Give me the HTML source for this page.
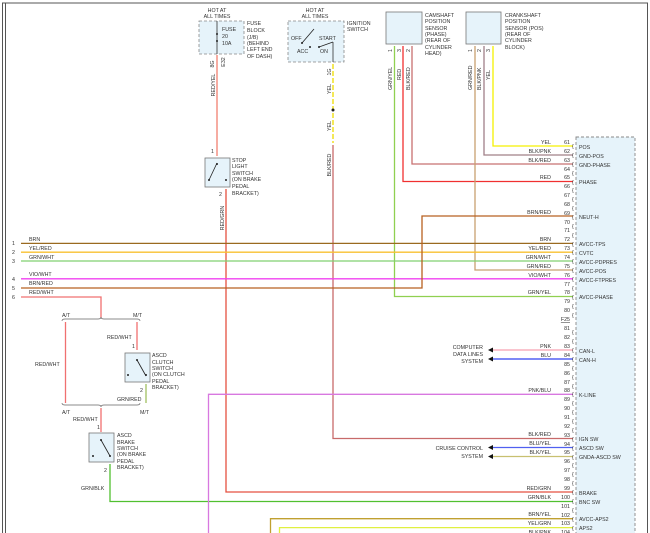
<!DOCTYPE html>
<html><head><meta charset="utf-8"><style>
html,body{margin:0;padding:0;background:#fff;width:650px;height:533px;overflow:hidden}
svg{display:block}
text{font-family:"Liberation Sans",sans-serif;font-size:5.3px;fill:#333}
.r{text-anchor:end}.c{text-anchor:middle}
.w{fill:none;stroke-width:1.3}
</style></head><body>
<svg width="650" height="533" viewBox="0 0 650 533">
<!-- border -->
<line x1="2.5" y1="3" x2="2.5" y2="533" stroke="#555" stroke-width="1"/>
<line x1="5.5" y1="3" x2="5.5" y2="533" stroke="#555" stroke-width="1"/>
<line x1="2" y1="3" x2="648" y2="3" stroke="#555" stroke-width="1"/>
<line x1="647.5" y1="3" x2="647.5" y2="533" stroke="#555" stroke-width="1"/>

<!-- ECM box -->
<rect x="576" y="137" width="59" height="400" fill="#e6f3fa" stroke="#888" stroke-dasharray="3,2" stroke-width="0.9"/>

<!-- fuse box -->
<rect x="199" y="21" width="45" height="33" fill="#e6f3fa" stroke="#888" stroke-dasharray="3,2" stroke-width="0.8"/>
<text class="c" x="217" y="12">HOT AT</text><text class="c" x="217" y="18">ALL TIMES</text>
<line x1="217" y1="21" x2="217" y2="54" stroke="#333" stroke-width="0.8"/>
<circle cx="217" cy="34" r="1" fill="#222"/><circle cx="217" cy="41" r="1" fill="#222"/>
<text x="222" y="31">FUSE</text><text x="222" y="38">20</text><text x="222" y="45">10A</text>
<text x="247" y="25">FUSE</text><text x="247" y="32">BLOCK</text><text x="247" y="39">(J/B)</text><text x="247" y="45">(BEHIND</text><text x="247" y="51">LEFT END</text><text x="247" y="58">OF DASH)</text>
<text transform="translate(214,64) rotate(-90)" class="c">8G</text>
<text transform="translate(225,62) rotate(-90)" class="c">E32</text>
<line class="w" x1="217" y1="55" x2="217" y2="156" stroke="#f08070" stroke-width="1.8"/>
<text transform="translate(215,85) rotate(-90)" class="c">RED/YEL</text>
<!-- stop light switch -->
<text x="211" y="153">1</text>
<rect x="205" y="158" width="25" height="29" fill="#e6f3fa" stroke="#777" stroke-width="0.8"/>
<line x1="217" y1="163" x2="209" y2="180" stroke="#222" stroke-width="0.8"/>
<circle cx="217" cy="164" r="1" fill="#222"/><circle cx="209" cy="180" r="1" fill="#222"/><circle cx="226" cy="180" r="1" fill="#222"/>
<text x="232" y="162">STOP</text><text x="232" y="168">LIGHT</text><text x="232" y="175">SWITCH</text><text x="232" y="181">(ON BRAKE</text><text x="232" y="188">PEDAL</text><text x="232" y="195">BRACKET)</text>
<text x="219" y="196">2</text>
<polyline class="w" points="226,189 226,492 573,492" stroke="#e55040" stroke-width="1.6"/>
<text transform="translate(224,218) rotate(-90)" class="c">RED/GRN</text>

<!-- ignition -->
<text class="c" x="315" y="12">HOT AT</text><text class="c" x="315" y="18">ALL TIMES</text>
<rect x="288" y="21" width="56" height="41" fill="#e6f3fa" stroke="#888" stroke-dasharray="3,2" stroke-width="0.8"/>
<text x="347" y="25">IGNITION</text><text x="347" y="31">SWITCH</text>
<text x="291" y="40">OFF</text><text x="297" y="53">ACC</text><text x="319" y="40">START</text><text x="320" y="53">ON</text>
<line x1="302" y1="43" x2="314" y2="29" stroke="#222" stroke-width="0.8"/>
<circle cx="302" cy="43" r="1" fill="#222"/><circle cx="310" cy="47" r="1" fill="#222"/><circle cx="319" cy="47" r="1" fill="#222"/>
<line x1="319" y1="47" x2="333" y2="42" stroke="#222" stroke-width="0.8"/>
<line x1="333" y1="42" x2="333" y2="62" stroke="#333" stroke-width="0.8"/>
<line x1="333" y1="64" x2="333" y2="143" stroke="#f0e020" stroke-width="1.5" stroke-dasharray="5,2"/>
<circle cx="333" cy="110" r="1.5" fill="#222"/>
<text transform="translate(331,72) rotate(-90)" class="c">1G</text>
<text transform="translate(331,89) rotate(-90)" class="c">YEL</text>
<text transform="translate(331,126) rotate(-90)" class="c">YEL</text>
<polyline class="w" points="333,145 333,438.5 573,438.5" stroke="#c86a6a"/>
<text transform="translate(331,165) rotate(-90)" class="c">BLK/RED</text>

<!-- camshaft -->
<rect x="386" y="12" width="36" height="32" fill="#e6f3fa" stroke="#777" stroke-width="0.8"/>
<text x="425" y="17">CAMSHAFT</text><text x="425" y="23">POSITION</text><text x="425" y="30">SENSOR</text><text x="425" y="36">(PHASE)</text><text x="425" y="42">(REAR OF</text><text x="425" y="49">CYLINDER</text><text x="425" y="55">HEAD)</text>
<text transform="translate(392,52) rotate(-90)">1</text><text transform="translate(401,52) rotate(-90)">3</text><text transform="translate(410,52) rotate(-90)">2</text>
<polyline class="w" points="394.5,46 394.5,296.5 573,296.5" stroke="#90d050"/>
<polyline class="w" points="403,46 403,181.5 573,181.5" stroke="#f03030"/>
<polyline class="w" points="412,46 412,164 573,164" stroke="#c87070"/>
<text transform="translate(392,90) rotate(-90)">GRN/YEL</text>
<text transform="translate(401,80) rotate(-90)">RED</text>
<text transform="translate(410,90) rotate(-90)">BLK/RED</text>

<!-- crank -->
<rect x="466" y="12" width="35" height="32" fill="#e6f3fa" stroke="#777" stroke-width="0.8"/>
<text x="505" y="17">CRANKSHAFT</text><text x="505" y="23">POSITION</text><text x="505" y="30">SENSOR (POS)</text><text x="505" y="36">(REAR OF</text><text x="505" y="42">CYLINDER</text><text x="505" y="49">BLOCK)</text>
<text transform="translate(472,52) rotate(-90)">1</text><text transform="translate(481,52) rotate(-90)">2</text><text transform="translate(490,52) rotate(-90)">3</text>
<polyline class="w" points="475,46 475,270 573,270" stroke="#c8a070"/>
<polyline class="w" points="484,46 484,155 573,155" stroke="#a08088"/>
<polyline class="w" points="493,46 493,146 573,146" stroke="#f5f000" stroke-width="1.6"/>
<text transform="translate(472,90) rotate(-90)">GRN/RED</text>
<text transform="translate(481,90) rotate(-90)">BLK/PNK</text>
<text transform="translate(490,80) rotate(-90)">YEL</text>

<!-- left horizontal wires -->
<g>
<text x="12" y="245">1</text><text x="12" y="254">2</text><text x="12" y="263">3</text><text x="12" y="281">4</text><text x="12" y="290">5</text><text x="12" y="299">6</text>
<text x="29" y="241">BRN</text><text x="29" y="250">YEL/RED</text><text x="29" y="259">GRN/WHT</text><text x="29" y="276">VIO/WHT</text><text x="29" y="285">BRN/RED</text><text x="29" y="294">RED/WHT</text>
<line class="w" x1="21" y1="243.4" x2="573" y2="243.4" stroke="#9a6a20"/>
<line class="w" x1="21" y1="252.2" x2="573" y2="252.2" stroke="#f8c030"/>
<line class="w" x1="21" y1="261" x2="573" y2="261" stroke="#80d070" stroke-width="1.6"/>
<line class="w" x1="21" y1="278.8" x2="573" y2="278.8" stroke="#f040f0"/>
<polyline class="w" points="21,288 422,288 422,216 573,216" stroke="#b86020"/>
<polyline class="w" points="21,297 101,297 101,318" stroke="#f07070"/>
</g>

<!-- A/T M/T -->
<path d="M62,321 q0,-2 3,-2 h33 q3,0 3,-2 q0,2 3,2 h33 q3,0 3,2" fill="none" stroke="#666" stroke-width="0.7"/>
<text x="62" y="317">A/T</text><text x="133" y="317">M/T</text>
<line class="w" x1="65.5" y1="322" x2="65.5" y2="403" stroke="#f07070"/>
<line class="w" x1="137" y1="322" x2="137" y2="350" stroke="#f07070"/>
<text x="35" y="366">RED/WHT</text><text x="107" y="339">RED/WHT</text>
<text x="132" y="348">1</text>
<rect x="125" y="353" width="25" height="29" fill="#e6f3fa" stroke="#777" stroke-width="0.8"/>
<line x1="137" y1="360" x2="146" y2="376" stroke="#222" stroke-width="0.8"/>
<circle cx="137" cy="360" r="1" fill="#222"/><circle cx="146" cy="375" r="1" fill="#222"/><circle cx="128" cy="375" r="1" fill="#222"/>
<text x="152" y="357">ASCD</text><text x="152" y="364">CLUTCH</text><text x="152" y="370">SWITCH</text><text x="152" y="376">(ON CLUTCH</text><text x="152" y="383">PEDAL</text><text x="152" y="389">BRACKET)</text>
<text x="140" y="392">2</text>
<line class="w" x1="146" y1="384" x2="146" y2="403" stroke="#a0c060"/>
<text x="117" y="401">GRN/RED</text>
<path d="M62,403 q0,2 3,2 h33 q3,0 3,2 q0,-2 3,-2 h33 q3,0 3,-2" fill="none" stroke="#666" stroke-width="0.7"/>
<text x="62" y="414">A/T</text><text x="140" y="414">M/T</text>
<line class="w" x1="101" y1="408" x2="101" y2="432" stroke="#f07070"/>
<text x="73" y="421">RED/WHT</text>
<text x="97" y="429">1</text>
<rect x="89" y="433" width="25" height="29" fill="#e6f3fa" stroke="#777" stroke-width="0.8"/>
<line x1="101" y1="440" x2="110" y2="456" stroke="#222" stroke-width="0.8"/>
<circle cx="101" cy="440" r="1" fill="#222"/><circle cx="110" cy="456" r="1" fill="#222"/><circle cx="93" cy="456" r="1" fill="#222"/>
<text x="117" y="437">ASCD</text><text x="117" y="444">BRAKE</text><text x="117" y="450">SWITCH</text><text x="117" y="456">(ON BRAKE</text><text x="117" y="463">PEDAL</text><text x="117" y="469">BRACKET)</text>
<text x="104" y="472">2</text>
<polyline class="w" points="110,464 110,501.5 573,501.5" stroke="#50c030"/>
<text x="81" y="490">GRN/BLK</text>

<!-- PNK/BLU -->
<polyline class="w" points="208.5,533 208.5,394.3 573,394.3" stroke="#d878e0"/>
<!-- bottom -->
<polyline class="w" points="270.5,533 270.5,518.7 573,518.7" stroke="#c0a030"/>
<polyline class="w" points="279.5,533 279.5,527.6 573,527.6" stroke="#e0f040"/>

<!-- data lines -->
<line class="w" x1="492" y1="350" x2="573" y2="350" stroke="#f8a0b0" stroke-width="1.5"/>
<line class="w" x1="492" y1="359" x2="573" y2="359" stroke="#3040f0" stroke-width="1.5"/>
<polygon points="488,350 493,347.5 493,352.5" fill="#111"/><polygon points="488,359 493,356.5 493,361.5" fill="#111"/>
<text class="r" x="483" y="349">COMPUTER</text><text class="r" x="483" y="356">DATA LINES</text><text class="r" x="483" y="363">SYSTEM</text>
<line class="w" x1="492" y1="447.5" x2="573" y2="447.5" stroke="#5060f0"/>
<line class="w" x1="492" y1="456.5" x2="573" y2="456.5" stroke="#c8c070"/>
<polygon points="488,447.5 493,445 493,450" fill="#111"/><polygon points="488,456.5 493,454 493,459" fill="#111"/>
<text class="r" x="483" y="450">CRUISE CONTROL</text><text class="r" x="483" y="458">SYSTEM</text>

<!-- wire labels at ECM -->
<g class="r">
<text class="r" x="551" y="144">YEL</text>
<text class="r" x="551" y="153">BLK/PNK</text>
<text class="r" x="551" y="162">BLK/RED</text>
<text class="r" x="551" y="179">RED</text>
<text class="r" x="551" y="214">BRN/RED</text>
<text class="r" x="551" y="241">BRN</text>
<text class="r" x="551" y="250">YEL/RED</text>
<text class="r" x="551" y="259">GRN/WHT</text>
<text class="r" x="551" y="268">GRN/RED</text>
<text class="r" x="551" y="277">VIO/WHT</text>
<text class="r" x="551" y="294">GRN/YEL</text>
<text class="r" x="551" y="348">PNK</text>
<text class="r" x="551" y="357">BLU</text>
<text class="r" x="551" y="392">PNK/BLU</text>
<text class="r" x="551" y="436">BLK/RED</text>
<text class="r" x="551" y="445">BLU/YEL</text>
<text class="r" x="551" y="454">BLK/YEL</text>
<text class="r" x="551" y="490">RED/GRN</text>
<text class="r" x="551" y="499">GRN/BLK</text>
<text class="r" x="551" y="516">BRN/YEL</text>
<text class="r" x="551" y="525">YEL/GRN</text>
<text class="r" x="551" y="534">BLK/PNK</text>
</g>
<!-- pin numbers -->
<g>
<text class="r" x="570" y="144">61</text><text class="r" x="570" y="153">62</text><text class="r" x="570" y="162">63</text><text class="r" x="570" y="171">64</text><text class="r" x="570" y="179">65</text><text class="r" x="570" y="188">66</text><text class="r" x="570" y="197">67</text><text class="r" x="570" y="206">68</text><text class="r" x="570" y="215">69</text><text class="r" x="570" y="224">70</text><text class="r" x="570" y="232">71</text><text class="r" x="570" y="241">72</text><text class="r" x="570" y="250">73</text><text class="r" x="570" y="259">74</text><text class="r" x="570" y="268">75</text><text class="r" x="570" y="277">76</text><text class="r" x="570" y="286">77</text><text class="r" x="570" y="294">78</text><text class="r" x="570" y="303">79</text><text class="r" x="570" y="312">80</text>
<text class="r" x="570" y="321" text-decoration="underline">F25</text>
<text class="r" x="570" y="330">81</text><text class="r" x="570" y="339">82</text><text class="r" x="570" y="348">83</text><text class="r" x="570" y="357">84</text><text class="r" x="570" y="366">85</text><text class="r" x="570" y="375">86</text><text class="r" x="570" y="384">87</text><text class="r" x="570" y="392">88</text><text class="r" x="570" y="401">89</text><text class="r" x="570" y="410">90</text><text class="r" x="570" y="419">91</text><text class="r" x="570" y="428">92</text><text class="r" x="570" y="437">93</text><text class="r" x="570" y="446">94</text><text class="r" x="570" y="454">95</text><text class="r" x="570" y="463">96</text><text class="r" x="570" y="472">97</text><text class="r" x="570" y="481">98</text><text class="r" x="570" y="490">99</text><text class="r" x="570" y="499">100</text><text class="r" x="570" y="508">101</text><text class="r" x="570" y="517">102</text><text class="r" x="570" y="525">103</text><text class="r" x="570" y="534">104</text>
</g>
<!-- brackets column -->
<g fill="#444">
<text x="572" y="148">{</text><text x="572" y="157">{</text><text x="572" y="166">{</text><text x="572" y="175">{</text><text x="572" y="184">{</text><text x="572" y="192">{</text><text x="572" y="201">{</text><text x="572" y="210">{</text><text x="572" y="219">{</text><text x="572" y="228">{</text><text x="572" y="237">{</text><text x="572" y="246">{</text><text x="572" y="254">{</text><text x="572" y="263">{</text><text x="572" y="272">{</text><text x="572" y="281">{</text><text x="572" y="290">{</text><text x="572" y="299">{</text><text x="572" y="308">{</text><text x="572" y="317">{</text>
<text x="572" y="334">{</text><text x="572" y="343">{</text><text x="572" y="352">{</text><text x="572" y="361">{</text><text x="572" y="370">{</text><text x="572" y="379">{</text><text x="572" y="388">{</text><text x="572" y="396">{</text><text x="572" y="405">{</text><text x="572" y="414">{</text><text x="572" y="423">{</text><text x="572" y="432">{</text><text x="572" y="441">{</text><text x="572" y="450">{</text><text x="572" y="459">{</text><text x="572" y="467">{</text><text x="572" y="476">{</text><text x="572" y="485">{</text><text x="572" y="494">{</text><text x="572" y="503">{</text><text x="572" y="512">{</text><text x="572" y="521">{</text><text x="572" y="530">{</text>
</g>
<!-- signal names -->
<g>
<text x="579" y="149">POS</text><text x="579" y="158">GND-POS</text><text x="579" y="167">GND-PHASE</text><text x="579" y="184">PHASE</text><text x="579" y="219">NEUT-H</text><text x="579" y="246">AVCC-TPS</text><text x="579" y="255">CVTC</text><text x="579" y="264">AVCC-PDPRES</text><text x="579" y="273">AVCC-POS</text><text x="579" y="282">AVCC-FTPRES</text><text x="579" y="299">AVCC-PHASE</text>
<text x="579" y="353">CAN-L</text><text x="579" y="362">CAN-H</text><text x="579" y="397">K-LINE</text><text x="579" y="441">IGN SW</text><text x="579" y="450">ASCD SW</text><text x="579" y="459">GNDA-ASCD SW</text><text x="579" y="495">BRAKE</text><text x="579" y="504">BNC SW</text><text x="579" y="521">AVCC-APS2</text><text x="579" y="530">APS2</text>
</g>
</svg>
</body></html>
